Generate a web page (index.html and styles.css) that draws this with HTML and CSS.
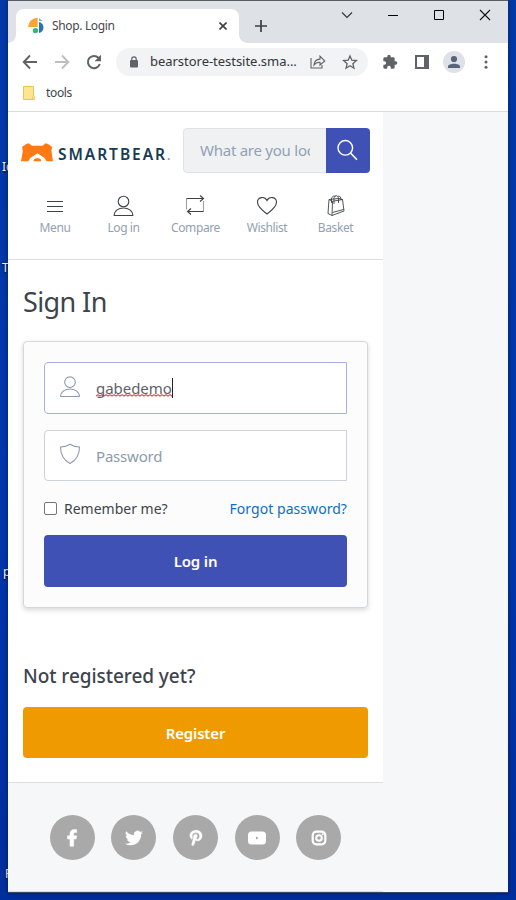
FILE: index.html
```html
<!DOCTYPE html>
<html lang="en">
<head>
<meta charset="utf-8">
<title>Shop. Login</title>
<link rel="stylesheet" href="styles.css">
</head>
<body>
<div class="desktop">
  <span class="desk-label l1">Ic</span>
  <span class="desk-label l2">T</span>
  <span class="desk-label l3">p</span>
  <span class="desk-label l4">F</span>
  <div class="window">
    <div class="tabstrip">
      <div class="tab">
        <svg class="favicon" width="17" height="16" viewBox="0 0 17 16"><path d="M0 9A9 9 0 0 1 9.700 0V9z" fill="#f9a535"/><path d="M11 4a6 5.700 0 0 1 0 11z" fill="#2674bd"/><circle cx="7.500" cy="12.600" r="2.700" fill="#36b37e"/><path d="M11 0l3.500 3H11z" fill="#5cc5be"/></svg>
        <span class="tab-title">Shop. Login</span>
        <svg class="tab-close" width="8" height="8" viewBox="0 0 8 8"><path d="M.5.5l7 7M7.500.5l-7 7" stroke="#3c4043" stroke-width="1.600"/></svg>
      </div>
      <svg class="newtab" width="12" height="12" viewBox="0 0 12 12"><path d="M6 0v12M0 6h12" stroke="#3c4043" stroke-width="1.700"/></svg>
      <div class="controls">
        <svg width="12" height="12" viewBox="0 0 12 12"><path d="M1 3.500l5 5 5-5" fill="none" stroke="#333" stroke-width="1.100"/></svg>
        <svg width="12" height="12" viewBox="0 0 12 12"><path d="M1 6.500h10" stroke="#000"/></svg>
        <svg width="12" height="12" viewBox="0 0 12 12"><path d="M1.500 1.500h9v9h-9z" fill="none" stroke="#000"/></svg>
        <svg width="12" height="12" viewBox="0 0 12 12"><path d="M1 1l10 10M11 1L1 11" stroke="#111" stroke-width="1.100"/></svg>
      </div>
    </div>
    <div class="toolbar">
      <svg class="nav-ic" width="16" height="16" viewBox="0 0 16 16"><path d="M15 8H2M8 1.500L1.700 8 8 14.500" fill="none" stroke="#5f6368" stroke-width="1.900"/></svg>
      <svg class="nav-ic" width="16" height="16" viewBox="0 0 16 16"><path d="M1 8h13M8 1.500L14.300 8 8 14.500" fill="none" stroke="#bcbec1" stroke-width="1.900"/></svg>
      <svg class="nav-ic" width="16" height="16" viewBox="0 0 16 16"><path d="M13.800 10A6.100 6.100 0 1 1 12.600 4" fill="none" stroke="#5f6368" stroke-width="2"/><path d="M15 .8v6.400H8.600z" fill="#5f6368"/></svg>
      <div class="omnibox">
        <svg width="8" height="12" viewBox="0 0 8 12"><rect y="4" width="8" height="7.500" rx="1" fill="#5f6368"/><path d="M1.800 5V3a2.200 2.200 0 0 1 4.400 0v2" fill="none" stroke="#5f6368" stroke-width="1.200"/></svg>
        <span class="url">bearstore-testsite.sma...</span>
        <svg class="share" width="16" height="14" viewBox="0 0 16 14"><path d="M1 3v10h11v-3M4 10c.3-4 2.500-5.800 6-5.900V1.200L14.800 6 10 10V7.200C7 7 5.200 8.300 4 10z" fill="none" stroke="#5f6368" stroke-width="1.100"/></svg>
        <svg width="16" height="16" viewBox="0 0 16 16"><path d="M8 1.900l1.800 4.300 4.600.4-3.500 3.100 1 4.500L8 11.800l-3.900 2.400 1-4.500-3.500-3.100 4.600-.4z" fill="none" stroke="#5f6368" stroke-width="1.300"/></svg>
      </div>
      <svg class="puzzle" width="16" height="16" viewBox="0 0 24 24"><path fill="#5f6368" d="M20.500 11H19V7c0-1.100-.9-2-2-2h-4V3.500a2.500 2.500 0 0 0-5 0V5H4c-1.100 0-2 .9-2 2v3.800h1.500a2.700 2.700 0 0 1 0 5.400H2V20c0 1.100.9 2 2 2h3.800v-1.500a2.700 2.700 0 0 1 5.400 0V22H17c1.100 0 2-.9 2-2v-4h1.500a2.500 2.500 0 0 0 0-5z"/></svg>
      <svg class="panel" width="14" height="14" viewBox="0 0 14 14"><path d="M1 1h12v12H1z" fill="#fff" stroke="#5f6368" stroke-width="2"/><path d="M9 1h4v12H9z" fill="#5f6368"/></svg>
      <svg class="avatar" width="22" height="22" viewBox="0 0 22 22"><circle cx="11" cy="11" r="11" fill="#dee1e6"/><circle cx="11" cy="8" r="3.100" fill="#58627a"/><path d="M5 17v-1.500C5 11.800 17 11.800 17 15.500V17z" fill="#58627a"/></svg>
      <svg class="dots" width="4" height="14" viewBox="0 0 4 14"><g fill="#5f6368"><circle cx="2" cy="1.800" r="1.500"/><circle cx="2" cy="7" r="1.500"/><circle cx="2" cy="12.200" r="1.500"/></g></svg>
    </div>
    <div class="bookmarks">
      <svg width="12" height="14" viewBox="0 0 12 14"><path d="M.5.5h10v13H.5z" fill="#ffe591" stroke="#eac54f"/><path d="M9.500 13.500v-3q1-2 2 0v3z" fill="#ffe591" stroke="#eac54f" stroke-width=".8"/></svg>
      <span>tools</span>
    </div>
    <div class="viewport">
      <div class="page">
        <header>
          <div class="top">
            <div class="logo">
              <svg width="32" height="19" viewBox="0 0 32 19"><path fill="#ff7a14" d="M1 4L5.300.9 7.700.2 11 2.700h10.500L24.500.2l2.600.7L31.200 4 30.400 8l1.600 10.200h-6.300L23.500 15 16.400 10.300 9.300 15l-2 3.200H0L1.800 8z"/><path fill="#ff7a14" d="M12.300 18.200l.8-2 1.700-1h3.200l1.600 1 .9 2z"/></svg>
              <span class="wordmark">SMARTBEAR<small>.</small></span>
            </div>
            <div class="search">
              <div class="search-field"><span>What are you looking for?</span></div>
              <div class="search-btn"><svg width="22" height="22" viewBox="0 0 22 22"><circle cx="8.300" cy="8.800" r="7.300" fill="none" stroke="#fff" stroke-width="1.400"/><path d="M13.500 14l6.500 6.800" stroke="#fff" stroke-width="1.600"/></svg></div>
            </div>
          </div>
          <nav>
            <a><svg class="line" width="22" height="22" viewBox="0 0 22 22"><path d="M3 6.500h16M3 11.500h16M3 16.500h16"/></svg>Menu</a>
            <a><svg class="line" width="22" height="22" viewBox="0 0 22 22"><circle cx="10.500" cy="6.500" r="5.300"/><path d="M1.200 20.500c0-10 18.600-10 18.600 0z"/></svg>Log in</a>
            <a><svg class="line" width="22" height="22" viewBox="0 0 22 22"><path d="M1.500 14.500V3.500" opacity=".5"/><path d="M1.500 3.500h17M15 .5l3.500 3-3.500 3M18.500 16.500h-16M6 13.500l-3.500 3 3.500 3"/><path d="M18.500 6v10.500" opacity=".5"/></svg>Compare</a>
            <a><svg class="line" width="22" height="22" viewBox="0 0 22 22"><path d="M11 19C7 16 1.500 11.500 1.500 7.200 1.500 2 8.500.8 11 5.500 13.500.8 20.500 2 20.500 7.200 20.500 11.500 15 16 11 19z"/></svg>Wishlist</a>
            <a><svg class="line basket" width="22" height="22" viewBox="0 0 22 22"><path d="M4 4.500l10-1 3.500 1L19 16l-12 4.500L3 18.500zM4 4.500l3.500 1.800L7 20.500M7.500 6.300l10-1.800M9 9V3.500c.5-4 4-3.500 4.500 0V8M6.500 8V4C7 1 9 .5 10.500 1.500M13 1c2 0 2.800 1 3 4M7.500 17.500l11-3"/></svg>Basket</a>
          </nav>
        </header>
        <main>
          <h1>Sign In</h1>
          <div class="card">
            <div class="field focus">
              <svg class="field-ic" width="22" height="22" viewBox="0 0 22 22"><circle cx="11" cy="6.200" r="5.300"/><path d="M1.600 20.500c0-10 18.800-10 18.800 0z"/></svg>
              <span class="value">gabedemo<svg class="squiggle" width="76" height="3" viewBox="0 0 76 3"><path d="M0 2.200l2-1.600 2 1.600 2-1.600 2 1.600 2-1.600 2 1.600 2-1.600 2 1.600 2-1.600 2 1.600 2-1.600 2 1.600 2-1.600 2 1.600 2-1.600 2 1.600 2-1.600 2 1.600 2-1.600 2 1.600 2-1.600 2 1.600 2-1.600 2 1.600 2-1.600 2 1.600 2-1.600 2 1.600 2-1.600 2 1.600 2-1.600 2 1.600 2-1.600 2 1.600 2-1.600 2 1.600 2-1.600 2 1.600"/></svg></span><i class="caret"></i>
            </div>
            <div class="field">
              <svg class="field-ic" width="22" height="22" viewBox="0 0 22 22"><path d="M11 1.300c3 2 6 2.700 9.500 2.700 0 8-3 13-9.500 16.500C4.500 17 1.500 12 1.500 4 5 4 8 3.300 11 1.300z"/></svg>
              <span>Password</span>
            </div>
            <div class="options">
              <label><i class="checkbox"></i><span>Remember me?</span></label>
              <a class="forgot">Forgot password?</a>
            </div>
            <div class="button login"><span>Log in</span></div>
          </div>
          <h2>Not registered yet?</h2>
          <div class="button register"><span>Register</span></div>
        </main>
        <footer>
          <div class="social">
            <b><svg width="18" height="18" viewBox="0 0 18 18"><path d="M7 17.300V10H4.500V6.800H7V5c0-3 1.700-4.400 4-4.400h2.700v3h-1.500c-1.300 0-1.500.5-1.500 1.500v1.700h3L13.200 10h-2.500v7.300z" stroke="#fff" stroke-width=".5"/></svg></b>
            <b><svg width="18" height="18" viewBox="0 0 24 24"><path d="M24 4.600c-.9.400-1.800.7-2.800.8 1-.6 1.800-1.600 2.200-2.700-1 .6-2 1-3.100 1.200a4.900 4.900 0 0 0-8.400 4.500C7.700 8.100 4.100 6.100 1.700 3.100a4.900 4.900 0 0 0 1.500 6.600c-.8 0-1.600-.2-2.200-.6 0 2.300 1.600 4.400 3.900 4.900-.7.200-1.500.2-2.200.1.600 2 2.400 3.400 4.600 3.400A9.900 9.900 0 0 1 0 19.500a13.900 13.900 0 0 0 7.500 2.200c9.100 0 14.300-7.700 14-14.600 1-.7 1.800-1.600 2.500-2.500z"/></svg></b>
            <b><svg width="18" height="18" viewBox="0 0 18 18"><path d="M4.600 10.300C.5 5.500 4.500 1.200 9.200 1.200c7.500 0 7.400 10.600 1.200 10.600-1 0-1.600-.5-1.900-1-.7 2.500-1 4.500-2.500 6l-1.300-.7c.3-2.500 1.300-5.200 1.900-7.700-.8-3.400 4-4.500 3.600-1.200l-.7 2.300c0 1 .9 1.200 1.400 1 2.500-1 2.500-7-1.900-6.900-3.500 0-4.600 2.800-3.300 5.200z" stroke="#fff" stroke-width=".5"/></svg></b>
            <b><svg width="18" height="18" viewBox="0 0 18 18"><rect y="2.500" width="18" height="13" rx="3.500"/><path d="M8 7.500v3L10.600 9z" fill="#a9a9a9"/></svg></b>
            <b><svg width="18" height="18" viewBox="0 0 18 18"><rect x="2.700" y="2.700" width="12.600" height="12.600" rx="3.500" fill="none" stroke="#fff" stroke-width="2.200"/><circle cx="9" cy="9" r="2.800" fill="none" stroke="#fff" stroke-width="2"/><circle cx="12.700" cy="5.300" r="1"/></svg></b>
          </div>
        </footer>
      </div>
    </div>
  </div>
</div>
</body>
</html>
```
FILE: styles.css
```css
* { box-sizing: border-box; }
body { margin: 0; font-family: "Noto Sans", "Open Sans", sans-serif; color: #3e444b; }
svg { display: block; flex: none; }
.desktop { position: relative; width: 516px; height: 900px; padding: 0 8px; overflow: hidden; background: linear-gradient(#0439a8, #0236ad 60%, #012e9d); }
.desk-label { position: absolute; font-size: 12px; line-height: 16px; color: #fff; text-shadow: 0 1px 2px #000; }
.l1 { left: 2px; top: 159px; }
.l2 { left: 2px; top: 260px; }
.l3 { left: 3px; top: 564px; }
.l4 { left: 5px; top: 866px; }
.window { position: relative; height: 893px; border-top: 1px solid #5c5d60; border-bottom: 1px solid #37476b; background: #fff; box-shadow: 0 0 5px rgba(0,0,0,.45); overflow: hidden; display: flex; flex-direction: column; }

.tabstrip { height: 42px; background: #dee1e6; display: flex; flex: none; }
.tab { width: 223px; height: 34px; margin: 8px 0 0 8px; padding: 0 12px; border-radius: 8px 8px 0 0; background: #fff; display: flex; align-items: center; position: relative; }
.tab::before, .tab::after { content: ""; position: absolute; bottom: 0; width: 8px; height: 8px; }
.tab::before { left: -8px; background: radial-gradient(circle at 0 0, #dee1e6 7.5px, #fff 8px); }
.tab::after { right: -8px; background: radial-gradient(circle at 100% 0, #dee1e6 7.5px, #fff 8px); }
.tab-title { margin: -1px 0 0 7px; font-size: 12px; letter-spacing: -.35px; color: #45494d; }
.tab-close { margin-left: auto; }
.newtab { margin: 19px 0 0 16px; }
.controls { display: flex; gap: 34px; margin: 8px 0 0 74px; }

.toolbar { height: 37px; padding-left: 14px; display: flex; align-items: center; flex: none; }
.nav-ic { margin-right: 16px; }
.omnibox { width: 252px; height: 28px; margin-left: -2px; padding: 0 10px 0 14px; border-radius: 14px; background: #f1f3f4; display: flex; align-items: center; }
.url { width: 148px; margin: -1px 0 0 12px; font-size: 13px; line-height: 20px; letter-spacing: -.03px; color: #33363a; white-space: nowrap; }
.share { margin: 0 16px 0 12px; }
.puzzle { margin-left: 14px; }
.panel { margin-left: 17px; }
.avatar { margin-left: 14px; }
.dots { margin-left: 19px; }
.bookmarks { height: 32px; padding: 0 0 6px 15px; border-bottom: 1px solid #dadbdd; display: flex; align-items: center; gap: 11px; font-size: 12px; flex: none; letter-spacing: -.35px; }

.viewport { flex: 1; background: #f6f7f9; }
.page { width: 375px; height: 780px; background: #fff; display: flex; flex-direction: column; }
header { height: 148px; border-bottom: 1px solid #dcddde; }
.top { display: flex; padding: 16px 13px 0; justify-content: space-between; }
.logo { display: flex; margin-top: 15px; height: 20px; }
.wordmark { margin: 1px 0 0 5px; font-family: "Noto Sans", sans-serif; font-weight: 600; font-size: 15.5px; line-height: 20px; letter-spacing: 1.95px; color: #163b52; white-space: nowrap; }
.wordmark small { font-size: 12px; color: #8796a0; }
.search { display: flex; width: 187px; height: 45px; border-radius: 4px; overflow: hidden; flex: none; }
.search-field { width: 143px; padding: 0 16px; border: 1px solid #e0e2e5; border-right: 0; border-radius: 4px 0 0 4px; background: #eff1f3; font-size: 15px; line-height: 43px; letter-spacing: -.25px; color: #92a1b3; }
.search-field span { display: block; overflow: hidden; white-space: nowrap; }
.search-btn { width: 44px; background: #3f51b5; padding: 11px; }
nav { display: grid; grid-template-columns: 64px 73px 71px 72px 65px; padding: 22px 15px 0; }
nav a { display: flex; flex-direction: column; align-items: center; gap: 3px; font-size: 12px; line-height: 16px; letter-spacing: -.4px; color: #92a1b1; }
.line, .field-ic { fill: none; stroke: #3d4248; stroke-width: 1.1; }
.basket { stroke-width: .9; }
.field-ic { stroke: #8d9bac; }

main { padding: 0 15px; height: 522px; }
h1 { margin: 23px 0 20px; font-size: 27px; line-height: 38px; font-weight: 400; letter-spacing: -.6px; }
.card { height: 267px; padding: 20px; border: 1px solid #d5d8da; border-radius: 4px; background: #fcfcfc; box-shadow: 0 2px 5px rgba(0,0,0,.16); }
.field { height: 51px; margin-bottom: 17px; padding-left: 14px; border: 1px solid #ccd2da; border-radius: 4px 0 0 4px; background: #fff; display: flex; align-items: center; font-size: 15px; letter-spacing: -.2px; color: #8d9bab; }
.focus { height: 52px; margin-bottom: 16px; border-color: #a8b0e2; color: #5d6269; }
.field-ic { margin-right: 15px; margin-top: -3px; }
.value { position: relative; letter-spacing: -.05px; }
.squiggle { position: absolute; left: 0; bottom: 1px; fill: none; stroke: #f00; }
.caret { width: 1px; height: 20px; background: #222; }
.options { height: 21px; margin-bottom: 16px; display: flex; justify-content: space-between; align-items: center; font-size: 14px; }
.options label { display: flex; align-items: center; gap: 7px; }
.checkbox { width: 13px; height: 13px; border: 1px solid #767676; border-radius: 2px; background: #fff; }
.forgot { color: #0d6fc4; letter-spacing: .05px; }
.button { display: flex; justify-content: center; align-items: center; border-radius: 4px; color: #fff; font-weight: 600; font-size: 15px; letter-spacing: -.15px; }
.login { height: 52px; background: #3f51b5; }
.register { height: 51px; background: #ef9b00; }
h2 { margin: 53px 0 16px; font-size: 19px; line-height: 30px; font-weight: 500; letter-spacing: -.06px; }

footer { flex: 1; border-top: 1px solid #dcdde0; border-bottom: 1px solid #dcdde0; background: #f6f7f9; }
.social { display: flex; justify-content: center; gap: 16.6px; padding-top: 32px; }
.social b { width: 45px; height: 45px; border-radius: 50%; background: #a9a9a9; display: flex; align-items: center; justify-content: center; }
.social svg { fill: #fff; }
```
